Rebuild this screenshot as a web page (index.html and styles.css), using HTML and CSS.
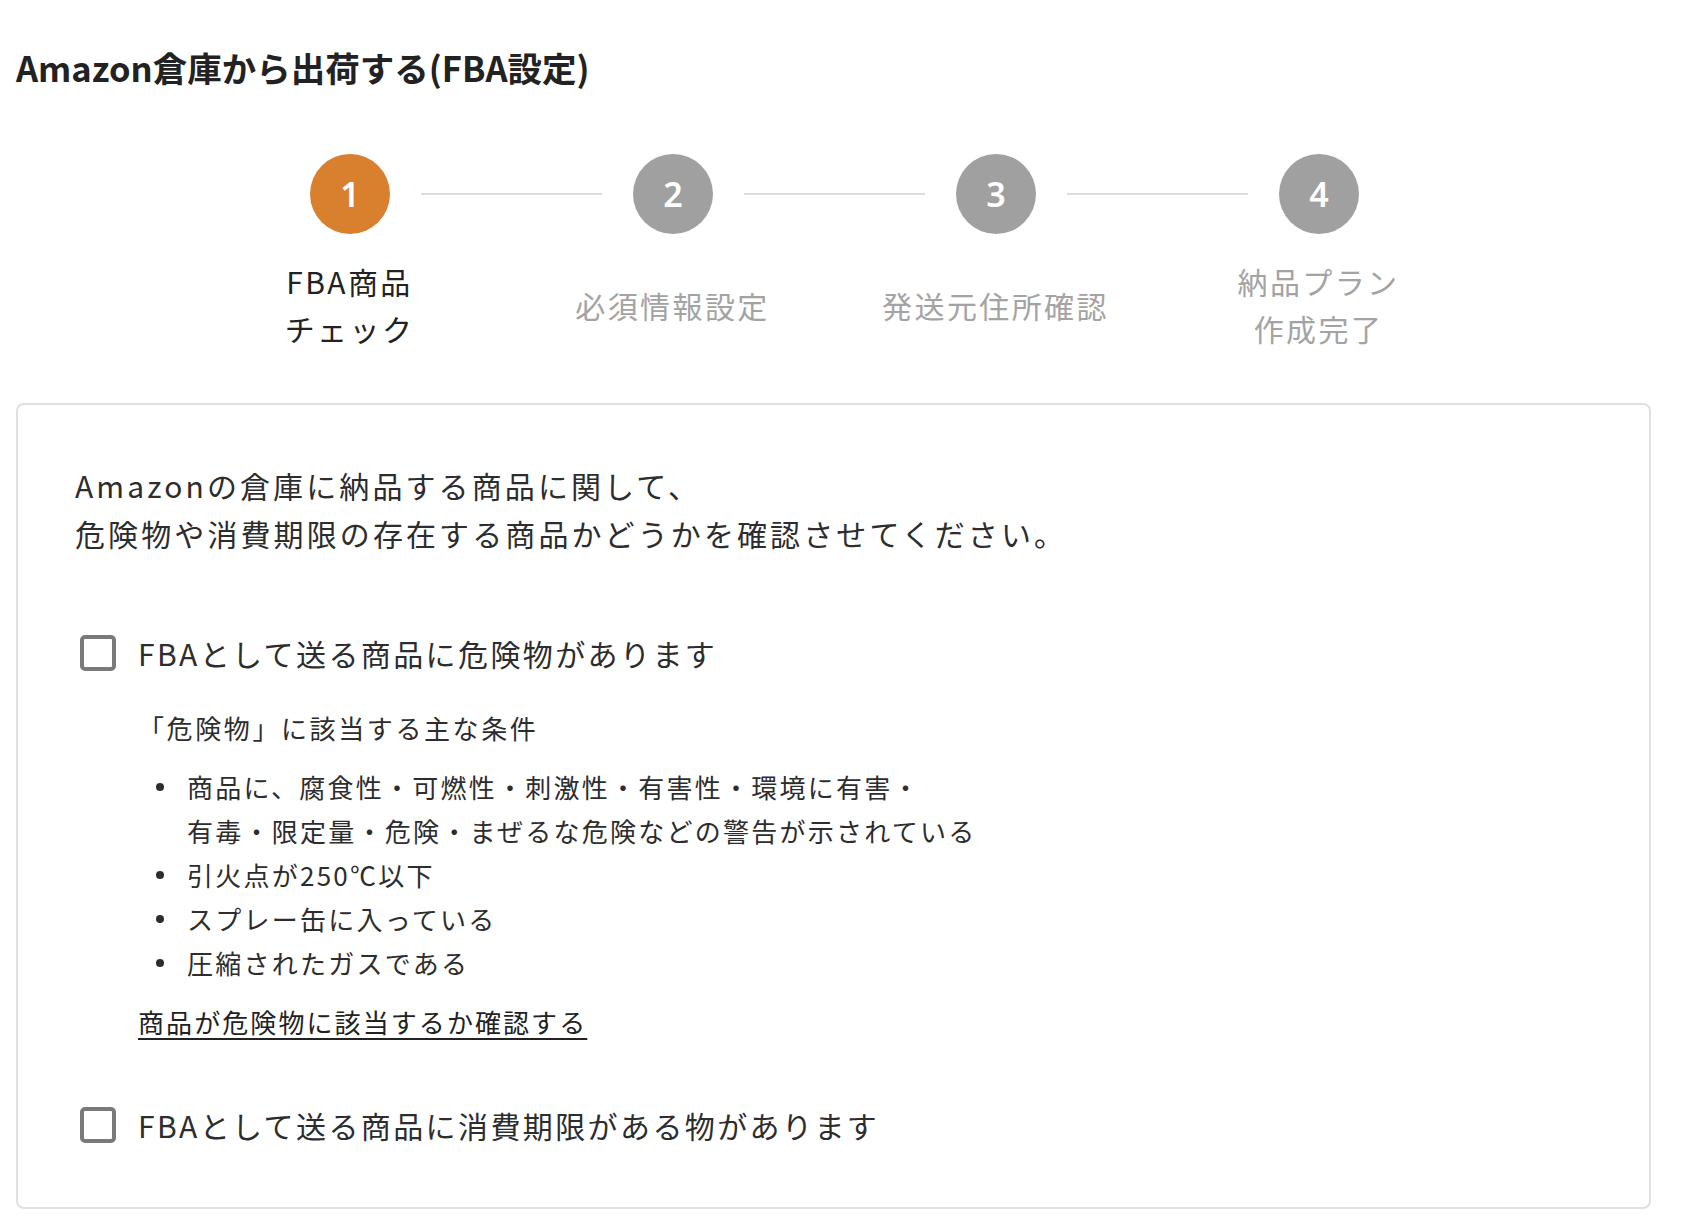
FILE: index.html
```html
<!DOCTYPE html>
<html lang="ja">
<head>
<meta charset="utf-8">
<title>Amazon倉庫から出荷する(FBA設定)</title>
<link rel="stylesheet" href="styles.css">
</head>
<body>
<div class="page">
  <h1 class="title">Amazon倉庫から出荷する(FBA設定)</h1>

  <div class="stepper">
    <div class="step-track">
      <div class="circle active">1</div>
      <div class="connector"></div>
      <div class="circle">2</div>
      <div class="connector"></div>
      <div class="circle">3</div>
      <div class="connector"></div>
      <div class="circle">4</div>
    </div>
    <div class="step-labels">
      <div class="step-label active">FBA商品<br>チェック</div>
      <div class="step-label">必須情報設定</div>
      <div class="step-label">発送元住所確認</div>
      <div class="step-label">納品プラン<br>作成完了</div>
    </div>
  </div>

  <section class="card">
    <p class="intro">Amazonの倉庫に納品する商品に関して、<br>危険物や消費期限の存在する商品かどうかを確認させてください。</p>

    <label class="check-row first">
      <span class="checkbox"></span>
      <span class="check-text">FBAとして送る商品に危険物があります</span>
    </label>

    <div class="detail">
      <p class="detail-head">「危険物」に該当する主な条件</p>
      <ul class="conditions">
        <li>商品に、腐食性・可燃性・刺激性・有害性・環境に有害・<br>有毒・限定量・危険・まぜるな危険などの警告が示されている</li>
        <li>引火点が250℃以下</li>
        <li>スプレー缶に入っている</li>
        <li>圧縮されたガスである</li>
      </ul>
      <a class="detail-link" href="#">商品が危険物に該当するか確認する</a>
    </div>

    <label class="check-row second">
      <span class="checkbox"></span>
      <span class="check-text">FBAとして送る商品に消費期限がある物があります</span>
    </label>
  </section>
</div>
</body>
</html>
```

FILE: styles.css
```css
* {
  box-sizing: border-box;
}

html, body {
  margin: 0;
  padding: 0;
  background: #ffffff;
}

body {
  font-family: "Noto Sans CJK JP", "Noto Sans", sans-serif;
  color: #2d2d2d;
}

.page {
  padding: 42px 0 0 16px;
  width: 1700px;
}

.title {
  margin: 0;
  font-size: 34.5px;
  line-height: 51px;
  font-weight: 700;
  color: #222222;
}

.stepper {
  margin-top: 61px;
  margin-left: 172px;
}

.step-track {
  display: flex;
  align-items: center;
  padding-left: 122px;
}

.circle {
  width: 80px;
  height: 80px;
  border-radius: 50%;
  background: #a0a0a0;
  color: #ffffff;
  display: flex;
  align-items: center;
  justify-content: center;
  font-family: "Noto Sans", "Noto Sans CJK JP", sans-serif;
  font-size: 34px;
  font-weight: 600;
  flex: none;
}

.circle.active {
  background: #d9802f;
}

.connector {
  width: 181px;
  height: 2px;
  margin: 0 31px;
  background: #dddddd;
  flex: none;
}

.step-labels {
  display: flex;
  margin-top: 24px;
  height: 94px;
}

.step-label {
  width: 323px;
  flex: none;
  display: flex;
  align-items: center;
  justify-content: center;
  text-align: center;
  font-size: 30px;
  line-height: 47px;
  letter-spacing: 0.08em;
  color: #a3a3a3;
}

.step-label.active {
  color: #222222;
}

.card {
  margin-top: 51px;
  width: 1635px;
  border: 2px solid #e0e0e0;
  border-radius: 8px;
  padding: 56px 56px 58px 57px;
}

.intro {
  margin: 0;
  font-size: 30px;
  line-height: 48px;
  letter-spacing: 3.1px;
  color: #2d2d2d;
}

.check-row {
  display: flex;
  align-items: center;
  font-size: 30px;
  line-height: 48px;
  letter-spacing: 0.08em;
  color: #2d2d2d;
  cursor: pointer;
}

.check-row.first {
  margin-top: 72px;
}

.check-row.second {
  margin-top: 57px;
}

.checkbox {
  width: 36px;
  height: 36px;
  border: 4px solid #7a7a7a;
  border-radius: 5px;
  margin-left: 5px;
  margin-right: 22px;
  flex: none;
  background: #ffffff;
}

.detail {
  padding-left: 63px;
  margin-top: 29px;
}

.detail-head {
  margin: 0;
  font-size: 26px;
  line-height: 44px;
  letter-spacing: 2.6px;
  color: #2d2d2d;
}

.conditions {
  list-style: none;
  margin: 15px 0 0 0;
  padding: 0;
}

.conditions li {
  display: flex;
  align-items: flex-start;
  font-size: 26px;
  line-height: 44px;
  letter-spacing: 2.25px;
  color: #2d2d2d;
}

.conditions li::before {
  content: "";
  flex: none;
  width: 8px;
  height: 8px;
  border-radius: 50%;
  background: #2d2d2d;
  margin: 18px 23px 0 18px;
}

.detail-link {
  display: inline-block;
  margin-top: 15px;
  font-size: 26px;
  line-height: 44px;
  letter-spacing: 0.08em;
  color: #222222;
  text-decoration: underline;
  text-underline-offset: 5px;
  text-decoration-thickness: 2px;
}
```
